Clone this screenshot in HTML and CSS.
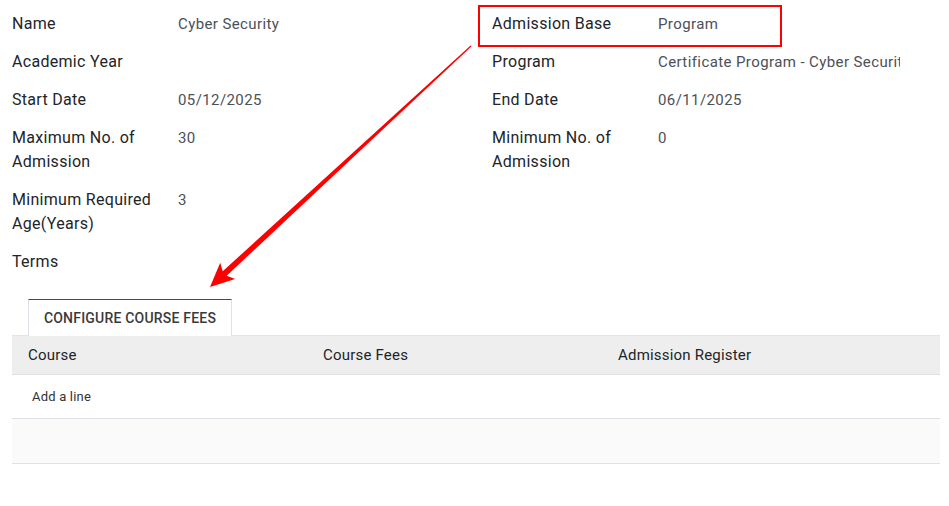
FILE: index.html
```html
<!DOCTYPE html>
<html>
<head>
<meta charset="utf-8">
<link rel="stylesheet" href="styles.css">
</head>
<body>
<div class="sheet">
  <div class="groups">
    <div class="group">
      <div class="field"><div class="label">Name</div><div class="value">Cyber Security</div></div>
      <div class="field"><div class="label">Academic Year</div><div class="value"></div></div>
      <div class="field"><div class="label">Start Date</div><div class="value">05/12/2025</div></div>
      <div class="field"><div class="label">Maximum No. of Admission</div><div class="value">30</div></div>
      <div class="field"><div class="label">Minimum Required Age(Years)</div><div class="value">3</div></div>
      <div class="field"><div class="label">Terms</div><div class="value"></div></div>
    </div>
    <div class="group right">
      <div class="field highlight"><div class="label">Admission Base</div><div class="value">Program</div></div>
      <div class="field"><div class="label">Program</div><div class="value clip">Certificate Program - Cyber Security</div></div>
      <div class="field"><div class="label">End Date</div><div class="value">06/11/2025</div></div>
      <div class="field"><div class="label">Minimum No. of Admission</div><div class="value">0</div></div>
    </div>
  </div>

  <div class="tabs">
    <div class="tab">CONFIGURE COURSE FEES</div>
  </div>
  <table class="lines">
    <thead>
      <tr><th>Course</th><th>Course Fees</th><th>Admission Register</th><th class="del"></th></tr>
    </thead>
    <tbody>
      <tr class="add"><td colspan="4"><span class="addline">Add a line</span></td></tr>
      <tr class="empty"><td colspan="4"></td></tr>
    </tbody>
  </table>

  <svg class="arrow" width="949" height="506" viewBox="0 0 949 506">
    <polygon fill="#ff0000" points="210,287 235.1,278.9 226.7,275.7 471.4,46.5 470.6,45.5 222.7,271.3 220.2,262.7"/>
  </svg>
</div>
</body>
</html>
```
FILE: styles.css
```css
* { box-sizing: border-box; }
html, body { margin: 0; padding: 0; background: #fff; }
body {
  font-family: Roboto, "Noto Sans", sans-serif;
  color: #212529;
  width: 949px;
  height: 506px;
  overflow: hidden;
}
.sheet {
  position: relative;
  padding: 12px 9px 0 12px;
}
.groups {
  display: grid;
  grid-template-columns: 480px 408px;
}
.group { display: flex; flex-direction: column; }
.field {
  display: grid;
  grid-template-columns: 166px 1fr;
  margin-bottom: 14px;
  line-height: 24px;
}
.label {
  font-size: 16px;
  color: #212529;
  padding-right: 12px;
  letter-spacing: 0.3px;
}
.value {
  font-size: 15px;
  color: #4c5058;
  white-space: nowrap;
  letter-spacing: 0.4px;
}
.clip { overflow: hidden; text-overflow: clip; }
.highlight { position: relative; }
.highlight::after {
  content: "";
  position: absolute;
  left: -14px;
  top: -7px;
  width: 300px;
  height: 38px;
  border: 2px solid #f00;
}
.tabs {
  display: flex;
  padding-left: 16px;
  margin-top: 11px;
}
.tab {
  height: 37px;
  width: 204px;
  border-top: 1px solid #4a4a4a;
  border-left: 1px solid #dee2e6;
  border-right: 1px solid #dee2e6;
  font-size: 14px;
  font-weight: 500;
  color: #3a3a3a;
  text-align: center;
  line-height: 36px;
  letter-spacing: 0.2px;
  margin-bottom: -1px;
  background: #fff;
  position: relative;
}
.lines {
  width: 928px;
  border-collapse: collapse;
  table-layout: fixed;
}
.lines th {
  background: #eeeeee;
  height: 39px;
  text-align: left;
  font-weight: 400;
  font-size: 15px;
  padding: 0 16px;
  width: 295px;
  border-top: 1px solid #e4e4e4;
  border-bottom: 1px solid #dee2e6;
  color: #212529;
  letter-spacing: 0.2px;
}
.lines th.del { width: 43px; }
.lines tr.add td {
  height: 44px;
  padding: 0 20px;
  font-size: 13px;
  border-bottom: 1px solid #dee2e6;
}
.addline { color: #2f3338; letter-spacing: 0.2px; }
.lines tr.empty td {
  height: 45px;
  background: #fafafa;
  border-bottom: 1px solid #dee2e6;
}
.arrow {
  position: absolute;
  left: 0;
  top: 0;
  pointer-events: none;
}
```
